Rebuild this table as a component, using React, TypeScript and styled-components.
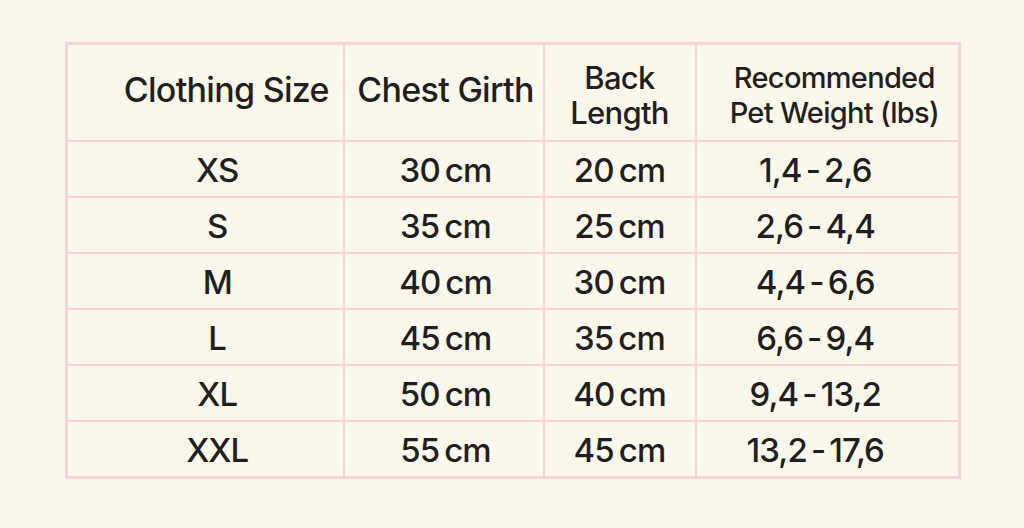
import React from "react";
import styled, { createGlobalStyle } from "styled-components";

const Global = createGlobalStyle`
  html, body { margin: 0; padding: 0; background: #fdf8ec; }
  body { font-family: "Inter", "Liberation Sans", Arial, sans-serif; color: #1f1f1f; }
`;

const Page = styled.div`
  width: 1024px;
  height: 528px;
  box-sizing: border-box;
  padding: 42px 0 0 65px;
  background: #fdf8ec;
`;

const Table = styled.table`
  border-collapse: collapse;
  width: 893px;
  table-layout: fixed;
  border: 3px solid #f9d2d8;
`;

const HeadCell = styled.th<{ $pl?: number; $size?: number; $pt?: number; $pb?: number }>`
  height: ${(p) => 95 - (p.$pt ?? 0) - (p.$pb ?? 0)}px;
  padding: ${(p) => p.$pt ?? 0}px 0 ${(p) => p.$pb ?? 0}px ${(p) => p.$pl ?? 0}px;
  border: 2px solid #f9d2d8;
  font-weight: 500;
  font-size: ${(p) => p.$size ?? 29}px;
  line-height: 35px;
  letter-spacing: -0.7px;
  text-align: center;
  vertical-align: middle;
`;

const Cell = styled.td<{ $pl?: number; $pr?: number }>`
  height: 52px;
  padding: 2px ${(p) => p.$pr ?? 0}px 0 ${(p) => p.$pl ?? 0}px;
  border: 2px solid #f9d2d8;
  font-size: 33px;
  font-weight: 500;
  letter-spacing: -0.9px;
  text-align: center;
  vertical-align: middle;
`;

const Unit = styled.span`
  margin-left: 5px;
`;

const Dash = styled.span`
  margin: 0 4px;
`;

const rows = [
  ["XS", "30", "20", "1,4", "2,6"],
  ["S", "35", "25", "2,6", "4,4"],
  ["M", "40", "30", "4,4", "6,6"],
  ["L", "45", "35", "6,6", "9,4"],
  ["XL", "50", "40", "9,4", "13,2"],
  ["XXL", "55", "45", "13,2", "17,6"],
];

export default function App() {
  return (
    <Page>
      <Global />
      <Table>
        <colgroup>
          <col style={{ width: 277 }} />
          <col style={{ width: 200 }} />
          <col style={{ width: 152 }} />
          <col style={{ width: 264 }} />
        </colgroup>
        <thead>
          <tr>
            <HeadCell $pl={42} $size={34} $pb={6}>Clothing Size</HeadCell>
            <HeadCell $pl={4} $size={34} $pb={6}>Chest Girth</HeadCell>
            <HeadCell $size={31} $pt={4}>
              Back
              <br />
              Length
            </HeadCell>
            <HeadCell $pl={14} $size={29} $pt={4}>
              Recommended
              <br />
              Pet Weight (lbs)
            </HeadCell>
          </tr>
        </thead>
        <tbody>
          {rows.map((r) => (
            <tr key={r[0]}>
              <Cell $pl={24}>{r[0]}</Cell>
              <Cell $pl={4}>
                {r[1]}
                <Unit>cm</Unit>
              </Cell>
              <Cell>
                {r[2]}
                <Unit>cm</Unit>
              </Cell>
              <Cell $pr={24}>
                {r[3]}
                <Dash>-</Dash>
                {r[4]}
              </Cell>
            </tr>
          ))}
        </tbody>
      </Table>
    </Page>
  );
}
